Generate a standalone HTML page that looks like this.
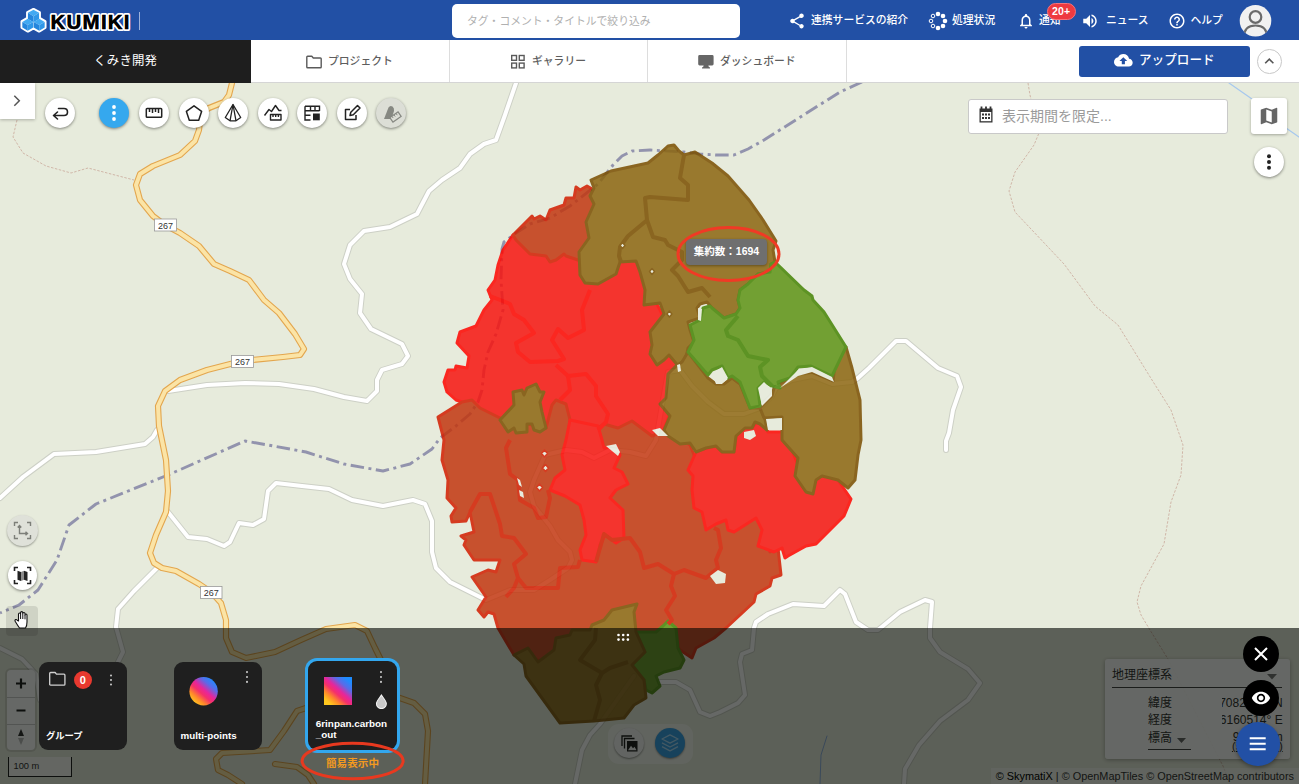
<!DOCTYPE html>
<html lang="ja">
<head>
<meta charset="utf-8">
<title>KUMIKI</title>
<style>
*{box-sizing:border-box;margin:0;padding:0}
html,body{width:1299px;height:784px;overflow:hidden;background:#e7ebdc;font-family:"Liberation Sans","Noto Sans CJK JP",sans-serif;}
#app{position:relative;width:1299px;height:784px;overflow:hidden}
.abs{position:absolute}
#hdr{position:absolute;left:0;top:0;width:1299px;height:40px;background:#2250a5;color:#fff}
#nav{position:absolute;left:0;top:40px;width:1299px;height:43px;background:#fff;border-bottom:1px solid #d5d5d5}
#nav .org{position:absolute;left:0;top:0;width:251px;height:43px;background:#1e1e1e;color:#fff;font-size:12.400px;line-height:43px;text-align:center;letter-spacing:.2px}
#nav .tab{position:absolute;top:0;height:42px;border-right:1px solid #ddd;color:#444;font-size:11.5px;font-weight:bold;line-height:42px}
#map{position:absolute;left:0;top:83px;width:1299px;height:701px;background:#e7ebdc;overflow:hidden}
#mapsvg{position:absolute;left:0;top:0}
.hitem{position:absolute;top:0;height:40px;line-height:40px;font-size:10.8px;font-weight:500;color:#fff;white-space:nowrap}
.tabt{position:absolute;top:0;height:42px;line-height:42px;font-size:10.8px;font-weight:500;color:#5e5e5e;white-space:nowrap}
.cbtn{position:absolute;width:30px;height:30px;border-radius:50%;background:#fff;box-shadow:0 1px 3px rgba(0,0,0,.45)}
.cbtn svg{position:absolute;left:0;top:0}
#ovl{position:absolute;left:0;top:628px;width:1299px;height:156px;background:rgba(0,4,0,.6)}
.card{position:absolute;background:#1f1f1f;border-radius:9px;color:#fff;font-size:11px;font-weight:bold}
</style>
</head>
<body>
<div id="app">

<!-- MAP -->
<div id="map">
<svg id="mapsvg" width="1299" height="701" viewBox="0 83 1299 701">
<defs>
<path id="rA" d="M516,83 L505,115 L496,140 L484,144 L470,154 L460,168 L442,180 L429,191 L417,214 L390,227 L364,231 L350,245 L344,264 L350,279 L362,294 L360,313 L371,329 L402,344 L408,356 L402,364 L382,370 L377,380 L377,391 L367,401 L344,397 L314,389 L279,384 L245,383 L207,385 L168,391"/>
<path id="rB" d="M0,498 L23,477 L54,454 L96,452 L145,444 L153,437 L157,430"/>
<path id="rC" d="M168,512 L188,537 L207,539 L224,546 L230,542 L239,523 L253,525 L264,519 L268,491 L276,483 L302,486 L329,489 L352,500 L383,506 L413,500 L425,504 L432,521 L432,552 L436,568 L450,582 L470,592 L486,600 L510,590 L534,590 L550,580 L568,568 L572,560 L570,552 L558,540 L550,526 L534,506 L530,492 L534,480 L545,455 L566,450 L582,452 L594,458 L610,450 L630,452 L646,456 L656,440 L662,405 L668,372 L680,370 L692,386 L708,402 L724,414 L744,414 L760,408 L772,396 L776,388 L792,380 L812,376 L832,384 L852,382 L858,378 L869,368 L896,341 L906,341 L938,368 L957,376 L961,387 L953,410 L949,433 L946,441 L946,450"/>
<path id="rD" d="M158,567 L134,591 L118,609 L116,627 L123,652 L118,662"/>
<path id="rD2" d="M0,648 L22,659 L36,674 L40,700"/>
<path id="rF" d="M660,682 L676,682 L690,690 L700,712 L710,716 L720,712 L738,703 L745,695 L740,662 L742,654 L752,650 L754,628 L756,622 L768,614 L793,604 L824,606 L840,590 L845,594 L856,622 L868,630 L878,630 L900,612 L925,600 L932,602 L930,628 L930,638 L940,652 L968,669 L980,683 L968,700 L940,721 L919,745 L905,769 L904,784"/>
<path id="rG" d="M634,676 L617,700 L600,724 L590,735 L582,750 L575,784"/>
<path id="yr" d="M232,83 L229,95 L224,102 L209,108 L201,113 L199,130 L195,141 L180,155 L153,166 L140,174 L136,185 L140,200 L153,216 L165,225 L180,233 L199,246 L214,264 L230,271 L249,280 L264,300 L279,313 L295,334 L304,349 L300,355 L283,357 L242,361 L207,370 L180,380 L165,391 L158,406 L159,426 L166,460 L168,491 L166,512 L156,535 L150,553 L154,563 L162,568 L176,571 L199,584 L211,592 L221,603 L226,620 L226,638 L232,652 L246,658 L275,652 L301,640 L326,629 L355,625 L367,631 L375,648 L381,660 L388,680 L397,697 L414,703 L425,714 L428,731 L425,784 M388,682 L370,698 L340,703 L306,708 L297,711 L284,731 L270,750 L222,753 L216,759 L218,770 L228,775 L242,784 M275,764 L297,767 L308,775 L314,784"/>
</defs>
<g id="roads" fill="none" stroke-linejoin="round" stroke-linecap="round">
<!-- thin dotted paths -->
<path d="M17,120 L13,137 L23,153 L46,166 L71,173 L88,168 L111,174 L134,180" stroke="#cdb0a2" stroke-width="0.9" stroke-dasharray="2.5,1.5" stroke-linecap="butt"/>
<path d="M1028,83 L1030,95 L1039,133 L1034,145 L1015,172 L1009,191 L1015,212 L1064,264 L1095,306 L1118,325 L1152,380 L1171,410 L1183,445 L1181,475 L1171,502 L1164,544 L1141,586 L1137,602 L1141,615 L1150,630 L1168,659 L1223,766 L1230,784" stroke="#cdb0a2" stroke-width="0.9" stroke-dasharray="2.5,1.5" stroke-linecap="butt"/>
<path d="M1229,83 L1252,99 L1286,128 L1299,137" stroke="#a6c8ee" stroke-width="1.2"/>
<path d="M827,736 L821,755 L820,784" stroke="#8fb0e0" stroke-width="1"/>
<!-- boundary dash-dot -->
<path d="M862,82 L840,92 L764,140 L748,149 L734,155 L716,155 L700,154 L684,152 L650,150 L632,151 L622,156 L613,165 L598,184 L570,206 L550,218 L530,224 L516,233 L504,242 L502,249 L501,280 L503,310 L496,334 L488,352 L484,370 L482,390 L478,402 L470,414 L456,426 L440,438 L432,449 L410,464 L383,471 L344,464 L306,452 L268,445 L245,441 L168,475 L96,504 L69,525 L57,560 L38,590 L19,605 L0,613" stroke="#9293ad" stroke-width="2.9" stroke-dasharray="13.5,4.5,3,4.5" stroke-linecap="butt"/>
<!-- white roads casing + fill -->
<!-- yellow road -->
<g stroke="#cdd0c6" stroke-width="6"><use href="#rA"/><use href="#rB"/><use href="#rC"/><use href="#rD"/><use href="#rD2"/><use href="#rF"/><use href="#rG"/></g>
<g stroke="#ffffff" stroke-width="4"><use href="#rA"/><use href="#rB"/><use href="#rC"/><use href="#rD"/><use href="#rD2"/><use href="#rF"/><use href="#rG"/></g>
<use href="#yr" stroke="#e3a64e" stroke-width="6.2"/>
<use href="#yr" stroke="#fbe4a6" stroke-width="4"/>
</g>

<g id="polys" opacity="0.85" stroke-linejoin="round">
<polygon points="513,235 503,250 498,265 495,280 488,290 492,300 484,310 476,326 460,332 457,343 469,356 467,368 456,366 455,370 448,370 444,382 447,392 456,400 462,402 480,415 560,445 600,440 660,440 675,400 680,360 666,322 650,290 640,262 600,250 560,240 530,230" fill="#f71510" stroke="#ff0500" stroke-width="3"/>
<polygon points="438,417 444,440 442,460 448,480 447,498 456,508 451,516 452,522 466,521 470,512 472,522 474,532 461,536 466,540 464,545 474,560 500,560 496,572 488,570 472,577 486,597 478,610 484,617 488,612 494,614 498,628 514,655 560,665 630,645 665,640 674,642 680,650 692,658 696,648 714,638 726,628 754,602 756,594 770,586 772,578 781,575 778,548 770,552 768,535 760,500 700,470 690,445 668,430 652,436 632,421 618,428 604,424 598,428 580,432 568,440 570,420 566,404 556,400 552,405 546,428 500,418 480,408 472,400 462,402" fill="#c23710" stroke="#d31d00" stroke-width="3"/>
<polygon points="513,235 532,216 534,219 540,216 546,220 550,210 564,205 566,198 574,198 576,187 580,190 587,186 594,190 596,210 590,240 582,262 578,260 566,256 564,254 556,260 550,262 546,256 530,254 516,240" fill="#c23710" stroke="#d31d00" stroke-width="3"/>
<polygon points="570,420 598,426 602,440 604,448 616,446 620,455 614,468 622,472 628,484 616,490 610,498 623,510 624,538 616,543 612,540 605,535 600,545 596,562 582,560 580,550 586,535 584,520 580,505 565,496 550,490 555,478 565,470 562,455 566,440" fill="#f71510" stroke="#ff0500" stroke-width="3"/>
<polygon points="696,452 706,448 716,446 722,452 734,452 736,436 745,428 752,428 758,420 766,428 768,432 782,432 790,445 800,470 825,470 838,480 851,499 844,516 816,544 806,546 788,556 785,558 782,548 774,552 758,546 762,530 756,518 734,532 728,530 726,520 716,524 706,530 702,512 694,508 692,490 693,476 688,470" fill="#f71510" stroke="#ff0500" stroke-width="3"/>
<polygon points="591,180 611,171 648,163 658,155 668,146 674,145 679,151 684,155 695,152 712,163 728,176 749,200 763,220 776,241 773,250 775,262 771,264 770,272 758,274 748,284 740,290 738,300 740,308 736,314 724,318 712,308 707,302 700,304 697,308 700,318 688,322 690,330 694,342 688,348 686,358 682,362 680,368 669,355 664,360 657,365 650,354 652,345 650,332 664,314 660,303 644,305 645,290 640,272 636,261 620,262 616,274 598,284 585,283 580,275 579,252 589,238 586,222 594,204 590,196 594,188" fill="#8c6610" stroke="#7a4e00" stroke-width="3"/>
<polygon points="676,366 668,374 666,398 660,404 670,416 664,430 668,436 680,444 690,443 696,452 706,448 716,446 722,452 734,452 736,436 745,428 752,428 755,422 760,424 767,430 765,419 760,408 750,408 740,384 732,378 724,384 716,384 708,378 688,352 682,362" fill="#8c6610" stroke="#7a4e00" stroke-width="3"/>
<polygon points="846,347 852,368 860,400 861,440 858,455 855,480 848,488 838,480 822,476 816,480 813,494 806,492 795,476 798,458 782,440 782,430 782,417 764,418 760,408 772,396 774,388 780,384 798,374 812,372 833,381 835,364" fill="#8c6610" stroke="#7a4e00" stroke-width="3"/>
<polygon points="500,420 514,405 513,392 522,390 524,395 527,388 536,384 540,392 544,392 540,402 542,412 546,428 540,432 534,430 532,424 527,424 527,432 516,433 514,428 508,432" fill="#8c6610" stroke="#7a4e00" stroke-width="3"/>
<polygon points="636,632 656,632 663,626 668,621 676,628 678,648 684,660 680,668 664,672 656,676 660,686 652,693 646,690 644,680 632,665 645,652" fill="#5e9316" stroke="#458405" stroke-width="3"/>
<polygon points="514,655 524,664 526,676 560,723 594,721 624,718 634,705 646,698 644,680 632,665 645,652 636,632 634,612 637,604 612,610 604,620 592,625 590,630 572,630 570,635 556,638 554,650 538,662 528,648" fill="#8c6610" stroke="#7a4e00" stroke-width="3"/>
<polygon points="775,262 804,290 812,296 813,300 824,312 846,347 832,376 811,366 798,367 790,378 778,382 780,388 772,386 764,382 758,388 760,406 750,408 740,382 732,376 728,378 722,366 712,370 708,375 688,352 694,340 690,325 700,320 703,308 710,306 712,308 724,318 736,314 740,308 738,300 740,290 748,284 758,274 770,272 771,264" fill="#5e9316" stroke="#458405" stroke-width="3"/>
<polyline points="684,155 680,178 688,185 688,200 650,197 645,198 647,220 653,237 665,240 668,245 682,252 682,260 672,270 678,276 688,292 702,288 710,297" fill="none" stroke="#7a4e00" stroke-width="4"/>
<polyline points="646,221 628,236 620,247 619,256 621,262" fill="none" stroke="#7a4e00" stroke-width="4"/>
<polyline points="738,316 726,330 728,336 738,340 748,356 768,360 760,367 762,376 772,386" fill="none" stroke="#458405" stroke-width="4"/>
<polyline points="490,296 510,304 514,314 524,320 534,333 516,343 518,352 530,362 558,361 564,359 552,340 558,329 568,338 584,330 582,310 590,290" fill="none" stroke="#ff0500" stroke-width="4"/>
<polyline points="556,365 568,376 586,374 596,386 596,396 608,414 606,422 598,430" fill="none" stroke="#ff0500" stroke-width="4"/>
<polyline points="568,376 570,390 560,400" fill="none" stroke="#ff0500" stroke-width="4"/>
<polyline points="510,440 506,448 510,474 518,480 520,500 534,508 538,518 546,517 550,498 548,490" fill="none" stroke="#d31d00" stroke-width="4"/>
<polyline points="470,512 480,494 490,494 500,524 502,536 514,538 526,554 514,564 518,578 514,588 506,597" fill="none" stroke="#d31d00" stroke-width="4"/>
<polyline points="518,578 526,588 558,588 560,568 578,567 580,560" fill="none" stroke="#d31d00" stroke-width="4"/>
<polyline points="596,562 604,534 612,540 630,538 640,552 644,568 658,564 674,574 684,570 706,578 718,568 716,560 721,548 718,530 714,528" fill="none" stroke="#d31d00" stroke-width="4"/>
<polyline points="674,574 671,586 675,596 666,610 672,620 668,624" fill="none" stroke="#d31d00" stroke-width="4"/>
<polyline points="596,628 595,640 580,660 602,673 610,668 628,662" fill="none" stroke="#7a4e00" stroke-width="4"/>
<polyline points="602,673 596,685 600,700 594,721" fill="none" stroke="#7a4e00" stroke-width="4"/>
<polygon points="712,374 722,367 728,378 722,384 716,384" fill="#e7ebdc"/>
<polygon points="758,388 764,382 772,390 772,396 762,406" fill="#e7ebdc"/>
<polygon points="798,370 812,367 832,377 834,382 812,372 798,376 780,388 790,378" fill="#e7ebdc"/>
<polygon points="766,419 782,418 782,430 768,430" fill="#e7ebdc"/>
<polygon points="744,432 754,430 756,436 750,440 744,438" fill="#e7ebdc"/>
<polygon points="606,446 616,444 620,452 618,456" fill="#e7ebdc"/>
<polygon points="652,430 660,428 668,436 658,436" fill="#e7ebdc"/>
<polygon points="710,576 718,570 726,574 725,583 716,584" fill="#e7ebdc"/>
<polygon points="698,308 702,309 701,321 698,320" fill="#e7ebdc"/>
<polygon points="677,365 680,364 681,371 678,372" fill="#e7ebdc"/>
<polygon points="517,478 520,480 522,487 519,485" fill="#e7ebdc"/>
<polygon points="519,490 523,492 524,498 520,496" fill="#e7ebdc"/>
<polygon points="649.5,271.5 652,268.5 654.5,271.5 652,274.5" fill="#e7ebdc" stroke="#7a4e00" stroke-width="1.5"/>
<polygon points="666.9,314 669.4,311 671.9,314 669.4,317" fill="#e7ebdc" stroke="#7a4e00" stroke-width="1.5"/>
<polygon points="620.0,245.5 622.5,242.5 625.0,245.5 622.5,248.5" fill="#e7ebdc" stroke="#7a4e00" stroke-width="1.5"/>
<polygon points="541.5,453.5 544.5,450.0 547.5,453.5 544.5,457.0" fill="#e7ebdc" stroke="#d31d00" stroke-width="1.6"/>
<polygon points="542.5,468 545.5,464.5 548.5,468 545.5,471.5" fill="#e7ebdc" stroke="#d31d00" stroke-width="1.6"/>
<polygon points="536.5,487.5 539.5,484.0 542.5,487.5 539.5,491.0" fill="#e7ebdc" stroke="#d31d00" stroke-width="1.6"/>
</g>
<g id="rlabels" font-family="Liberation Sans, sans-serif" font-size="9.500" fill="#333" text-anchor="middle">
<rect x="154.500" y="219" width="22" height="12" fill="#fff" stroke="#999" stroke-width="0.800"/><text x="165.500" y="228.500" textLength="15" lengthAdjust="spacingAndGlyphs">267</text>
<rect x="231.500" y="355.500" width="22" height="12" fill="#fff" stroke="#999" stroke-width="0.800"/><text x="242.500" y="365" textLength="15" lengthAdjust="spacingAndGlyphs">267</text>
<rect x="200.500" y="586.500" width="21.500" height="12" fill="#fff" stroke="#999" stroke-width="0.800"/><text x="211.200" y="596" textLength="15" lengthAdjust="spacingAndGlyphs">267</text>
</g>
</svg>
</div>

<!-- HEADER -->
<div id="hdr">
  <svg class="abs" style="left:0;top:0" width="160" height="40" viewBox="0 0 160 40">
    <!-- cubes logo -->
    <g transform="translate(33.5 20.5) scale(0.93) translate(-33.5 -20.5)"><g stroke="#fff" stroke-width="3" stroke-linejoin="round" fill="#fff">
      <path d="M33.5,8.5 L40,12 L40,18 L46,21.5 L46,28 L39.5,32 L33.5,28.5 L27.5,32 L21,28 L21,21.5 L27,18 L27,12 Z"/>
    </g>
    <g stroke="none">
      <path d="M33.5,9 L39.5,12.3 L33.5,15.8 L27.5,12.3 Z" fill="#41a9f2"/>
      <path d="M27.5,12.3 L33.5,15.8 L33.5,22.5 L27.5,19 Z" fill="#2486dd"/>
      <path d="M39.5,12.3 L33.5,15.8 L33.5,22.5 L39.5,19 Z" fill="#2f97e8"/>
      <path d="M27.3,18.6 L33.3,22 L27.3,25.4 L21.5,22 Z" fill="#41a9f2"/>
      <path d="M21.5,22 L27.3,25.4 L27.3,31.5 L21.5,28 Z" fill="#2486dd"/>
      <path d="M33.3,22 L27.3,25.4 L27.3,31.5 L33.3,28 Z" fill="#2f97e8"/>
      <path d="M39.7,18.6 L45.5,22 L39.7,25.4 L33.7,22 Z" fill="#41a9f2"/>
      <path d="M33.7,22 L39.7,25.4 L39.7,31.5 L33.7,28 Z" fill="#2486dd"/>
      <path d="M45.5,22 L39.7,25.4 L39.7,31.5 L45.5,28 Z" fill="#2f97e8"/>
    </g></g>
    <text x="50.6" y="28.8" font-family="Liberation Sans, sans-serif" font-weight="bold" font-size="20.5" letter-spacing="1.2" fill="#000" stroke="#fff" stroke-width="4" stroke-linejoin="round" paint-order="stroke">KUMIKI</text>
    <text x="50.6" y="28.8" font-family="Liberation Sans, sans-serif" font-weight="bold" font-size="20.5" letter-spacing="1.2" fill="#000" stroke="#000" stroke-width="0.3">KUMIKI</text>
    <rect x="139" y="12" width="1" height="18" fill="#9db2dc"/>
  </svg>
  <div class="abs" style="left:452px;top:4px;width:288px;height:34px;background:#fff;border-radius:5px;color:#b0b0b0;font-size:10.8px;line-height:34px;padding-left:15px">タグ・コメント・タイトルで絞り込み</div>

  <!-- share -->
  <svg class="abs" style="left:788px;top:12px" width="18" height="18" viewBox="0 0 24 24"><path fill="#fff" d="M18 16.08c-.76 0-1.44.3-1.96.77L8.91 12.7c.05-.23.09-.46.09-.7s-.04-.47-.09-.7l7.05-4.11c.54.5 1.25.81 2.04.81 1.660 0 3-1.340 3-3s-1.340-3-3-3-3 1.340-3 3c0 .24.04.47.09.7L8.040 9.810C7.500 9.310 6.790 9 6 9c-1.660 0-3 1.340-3 3s1.340 3 3 3c.79 0 1.500-.31 2.040-.81l7.120 4.160c-.05.21-.08.43-.08.65 0 1.610 1.310 2.920 2.920 2.920 1.610 0 2.920-1.310 2.920-2.920s-1.310-2.920-2.920-2.920z"/></svg>
  <div class="hitem" style="left:811px">連携サービスの紹介</div>
  <!-- process -->
  <svg class="abs" style="left:928px;top:11px" width="20" height="20" viewBox="-10 -10 20 20">
    <g fill="#fff"><circle cx="0" cy="-7" r="2.3"/><circle cx="7" cy="0" r="2.3"/><circle cx="0" cy="7" r="2.3"/><circle cx="5" cy="5" r="2.3"/><circle cx="5" cy="-5" r="2.3"/></g>
    <g fill="none" stroke="#fff" stroke-width="1"><circle cx="-5" cy="-5" r="1.8"/><circle cx="-7" cy="0" r="1.8"/><circle cx="-5" cy="5" r="1.8"/></g>
  </svg>
  <div class="hitem" style="left:952px">処理状況</div>
  <!-- bell -->
  <svg class="abs" style="left:1017px;top:12px" width="18" height="18" viewBox="0 0 24 24"><path fill="#fff" d="M12 22c1.100 0 2-.9 2-2h-4c0 1.100.9 2 2 2zm6-6v-5c0-3.070-1.630-5.640-4.500-6.320V4c0-.83-.67-1.500-1.500-1.500s-1.500.67-1.500 1.500v.68C7.640 5.360 6 7.920 6 11v5l-2 2v1h16v-1l-2-2zm-2 1H8v-6c0-2.480 1.510-4.500 4-4.500s4 2.020 4 4.500v6z"/></svg>
  <div class="hitem" style="left:1039px">通知</div>
  <div class="abs" style="left:1046.500px;top:2.500px;width:29.500px;height:17px;border-radius:9px;background:#ee3a40;border:1px solid #f5737a;color:#fff;font-size:10.500px;font-weight:bold;line-height:15px;text-align:center;letter-spacing:.2px">20+</div>
  <!-- speaker -->
  <svg class="abs" style="left:1081px;top:11.500px" width="18" height="18" viewBox="0 0 24 24"><path fill="#fff" d="M3 9v6h4l5 5V4L7 9H3zm13.500 3c0-1.770-1.020-3.290-2.500-4.030v8.050c1.480-.73 2.500-2.250 2.500-4.020zM14 3.230v2.060c2.890.86 5 3.540 5 6.710s-2.110 5.850-5 6.710v2.060c4.010-.91 7-4.490 7-8.770s-2.990-7.860-7-8.770z"/></svg>
  <div class="hitem" style="left:1106px">ニュース</div>
  <!-- help -->
  <svg class="abs" style="left:1168px;top:11.800px" width="18" height="18" viewBox="0 0 24 24"><path fill="#fff" d="M11 18h2v-2h-2v2zm1-16C6.480 2 2 6.480 2 12s4.480 10 10 10 10-4.480 10-10S17.520 2 12 2zm0 18c-4.410 0-8-3.590-8-8s3.590-8 8-8 8 3.590 8 8-3.590 8-8 8zm0-14c-2.210 0-4 1.790-4 4h2c0-1.100.9-2 2-2s2 .9 2 2c0 2-3 1.750-3 5h2c0-2.250 3-2.500 3-5 0-2.210-1.790-4-4-4z"/></svg>
  <div class="hitem" style="left:1190.500px">ヘルプ</div>
  <!-- avatar -->
  <svg class="abs" style="left:1239px;top:4px" width="33" height="33" viewBox="0 0 33 33">
    <defs><clipPath id="avc"><circle cx="16.500" cy="16.800" r="15.800"/></clipPath></defs>
    <circle cx="16.500" cy="16.800" r="15.800" fill="#f1f1f1"/>
    <g clip-path="url(#avc)" fill="none" stroke="#6b6b6b" stroke-width="2.200">
      <circle cx="16.500" cy="13" r="5.800"/>
      <path d="M5,33 C5,24 10,21.500 16.500,21.500 C23,21.500 28,24 28,33"/>
    </g>
  </svg>
</div>

<!-- NAV -->
<div id="nav">
  <div class="org">くみき開発</div>
  <div class="abs" style="left:449px;top:0;width:1px;height:42px;background:#ddd"></div>
  <div class="abs" style="left:647px;top:0;width:1px;height:42px;background:#ddd"></div>
  <div class="abs" style="left:846px;top:0;width:1px;height:42px;background:#ddd"></div>
  <!-- folder -->
  <svg class="abs" style="left:305px;top:14px" width="18" height="16" viewBox="0 0 18 16"><path d="M1.800,3 Q1.800,2.200 2.600,2.200 L6.800,2.200 L8.300,4 L15.400,4 Q16.200,4 16.200,4.800 L16.200,13 Q16.200,13.800 15.400,13.800 L2.600,13.800 Q1.800,13.800 1.800,13 Z" fill="none" stroke="#5a5a5a" stroke-width="1.400" stroke-linejoin="round"/></svg>
  <div class="tabt" style="left:328px">プロジェクト</div>
  <!-- grid -->
  <svg class="abs" style="left:510px;top:14px" width="16" height="16" viewBox="0 0 16 16"><g fill="none" stroke="#5a5a5a" stroke-width="1.400"><rect x="1.700" y="1.500" width="4.800" height="4.800"/><rect x="9.300" y="1.500" width="4.800" height="4.800"/><rect x="1.700" y="9.100" width="4.800" height="4.800"/><rect x="9.300" y="9.100" width="4.800" height="4.800"/></g></svg>
  <div class="tabt" style="left:532px">ギャラリー</div>
  <!-- monitor -->
  <svg class="abs" style="left:697px;top:14px" width="18" height="16" viewBox="0 0 18 16"><path d="M2.600,1 L15.200,1 Q16.600,1 16.600,2.400 L16.600,10 Q16.600,11.400 15.200,11.400 L11.300,11.400 L12,13.200 L13,13.200 L13,14.600 L5,14.600 L5,13.200 L6,13.200 L6.700,11.400 L2.600,11.400 Q1.200,11.400 1.200,10 L1.200,2.400 Q1.200,1 2.600,1 Z" fill="#666"/></svg>
  <div class="tabt" style="left:720px">ダッシュボード</div>
  <!-- upload -->
  <div class="abs" style="left:1079px;top:6px;width:171px;height:30.500px;background:#2250a5;border-radius:3px"></div>
  <svg class="abs" style="left:1114.300px;top:11.300px" width="18.700" height="18.700" viewBox="0 0 24 24"><path fill="#fff" d="M19.350 10.040C18.670 6.590 15.640 4 12 4 9.110 4 6.600 5.640 5.350 8.040 2.340 8.360 0 10.910 0 14c0 3.310 2.690 6 6 6h13c2.760 0 5-2.240 5-5 0-2.640-2.050-4.780-4.650-4.960zM14 13v4h-4v-4H7l5-5 5 5h-3z"/></svg>
  <div class="abs" style="left:1139px;top:6px;height:30px;line-height:29px;color:#fff;font-size:12.600px;font-weight:500;white-space:nowrap">アップロード</div>
  <div class="abs" style="left:1257px;top:9.200px;width:24.600px;height:24.600px;border-radius:50%;border:1px solid #c8c8c8;background:#fff"></div>
  <svg class="abs" style="left:1257px;top:9.200px" width="24.600" height="24.600" viewBox="0 0 24.600 24.600"><path d="M8.200,14.300 L12.300,10.200 L16.400,14.300" fill="none" stroke="#555" stroke-width="1.600"/></svg>
</div>

<!-- MAP CONTROLS -->
<div class="abs" style="left:0;top:83px;width:34.500px;height:36px;background:#fff;box-shadow:0 1px 3px rgba(0,0,0,.25)"></div>
<svg class="abs" style="left:0;top:83px" width="35" height="36" viewBox="0 0 35 36"><path d="M14.300,12.800 L19.300,17.800 L14.300,22.800" fill="none" stroke="#555" stroke-width="1.500"/></svg>

<div class="cbtn" style="left:45px;top:98px"><svg width="30" height="30" viewBox="0 0 30 30"><path d="M9,17.500 L19,17.500 Q22.500,17.500 22.500,14 Q22.500,10.500 19,10.500 L13.500,10.500 M12.500,14 L8.500,17.500 L12.500,21" fill="none" stroke="#222" stroke-width="1.600" stroke-linecap="round" stroke-linejoin="round"/></svg></div>
<div class="cbtn" style="left:99px;top:98px;background:#35a8ee"><svg width="30" height="30" viewBox="0 0 30 30"><g fill="#fff"><circle cx="15" cy="9" r="1.900"/><circle cx="15" cy="15" r="1.900"/><circle cx="15" cy="21" r="1.900"/></g></svg></div>
<div class="cbtn" style="left:138.500px;top:98px"><svg width="30" height="30" viewBox="0 0 30 30"><g fill="none" stroke="#222" stroke-width="1.500"><rect x="7.300" y="10.500" width="15.400" height="8.800" rx="0.800"/><path d="M10.500,10.500 V14 M13.500,10.500 V15 M16.500,10.500 V14 M19.500,10.500 V15"/></g></svg></div>
<div class="cbtn" style="left:178.500px;top:98px"><svg width="30" height="30" viewBox="0 0 30 30"><path d="M15,7.800 L22.600,13.400 L19.700,22.200 L10.300,22.200 L7.400,13.400 Z" fill="none" stroke="#222" stroke-width="1.500" stroke-linejoin="round"/></svg></div>
<div class="cbtn" style="left:218px;top:98px"><svg width="30" height="30" viewBox="0 0 30 30"><g fill="none" stroke="#222" stroke-width="1.300" stroke-linejoin="round"><path d="M15,6.500 L7.300,19.500 L12,22.800 L18,22.800 L22.700,19.500 Z"/><path d="M15,6.500 L12,22.800 M15,6.500 L18,22.800"/></g></svg></div>
<div class="cbtn" style="left:257.500px;top:98px"><svg width="30" height="30" viewBox="0 0 30 30"><g fill="none" stroke="#222" stroke-width="1.400" stroke-linejoin="round"><path d="M6.500,17.500 L11,11.500 L13.500,13.500 L17.500,7.500 L21,12.500 L23.500,12.500"/><rect x="12.500" y="16.500" width="10.500" height="5.500"/><path d="M15,16.500 V19 M17.700,16.500 V19 M20.400,16.500 V19"/></g></svg></div>
<div class="cbtn" style="left:297px;top:98px"><svg width="30" height="30" viewBox="0 0 30 30"><g fill="none" stroke="#222" stroke-width="1.400"><path d="M8,8.300 H22.500 V13 M8,8.300 V22 H13.500 M8,12.700 H22.500 M8,17.300 H13.500 M13.500,8.300 V12.700 M18,8.300 V12.700"/></g><rect x="16" y="15.500" width="6.800" height="6.800" fill="#222"/></svg></div>
<div class="cbtn" style="left:336.500px;top:98px"><svg width="30" height="30" viewBox="0 0 30 30"><g fill="none" stroke="#222" stroke-width="1.500" stroke-linejoin="round"><path d="M13,11.500 H8.500 V21.500 H19 V17"/><path d="M13,17.500 L13.800,14.200 L20.500,7.500 L23,10 L16.300,16.700 Z"/></g></svg></div>
<div class="cbtn" style="left:376px;top:98px;background:#dcded6"><svg width="30" height="30" viewBox="0 0 30 30"><path d="M8,21 L12.500,9.500 Q14,7 16.500,8.500 Q18.500,10 18,13 L15.500,21 Z" fill="#868882"/><g transform="rotate(-35 19.500 19)"><rect x="14.500" y="16.300" width="10" height="5.400" fill="#dcded6" stroke="#868882" stroke-width="1.200"/><path d="M17,16.300 V18.500 M19.500,16.300 V18.500 M22,16.300 V18.500" stroke="#868882" stroke-width="0.900"/></g></svg></div>

<!-- date filter -->
<div class="abs" style="left:967.500px;top:98.500px;width:260px;height:35px;background:#fff;border:1px solid #c9c9c9;border-radius:3px"></div>
<svg class="abs" style="left:977px;top:105px" width="18" height="20" viewBox="0 0 18 20"><path d="M2.500,3.500 H15.500 V17.500 H2.500 Z" fill="#333"/><path d="M4.500,1.500 V4 M9,1.500 V4 M13.500,1.500 V4" stroke="#333" stroke-width="1.800"/><rect x="3.800" y="7" width="10.400" height="9.200" fill="#fff"/><g fill="#333"><rect x="5" y="8.500" width="2" height="2"/><rect x="8" y="8.500" width="2" height="2"/><rect x="11" y="8.500" width="2" height="2"/><rect x="5" y="12" width="2" height="2"/><rect x="8" y="12" width="2" height="2"/><rect x="11" y="12" width="2" height="2"/></g></svg>
<div class="abs" style="left:1002px;top:98.500px;height:35px;line-height:34px;font-size:14px;color:#9a9a9a;white-space:nowrap">表示期間を限定...</div>
<!-- map button -->
<div class="abs" style="left:1250.500px;top:98px;width:36.500px;height:36px;background:#fff;border-radius:3px;box-shadow:0 1px 3px rgba(0,0,0,.3)"></div>
<svg class="abs" style="left:1258px;top:105px" width="22" height="22" viewBox="0 0 24 24"><path fill="#666" d="M20.500 3l-.16.030L15 5.100 9 3 3.360 4.900c-.21.070-.36.250-.36.480V20.500c0 .28.220.5.500.5l.16-.03L9 18.900l6 2.100 5.640-1.900c.21-.7.360-.25.360-.48V3.500c0-.28-.22-.5-.5-.5zM15 19l-6-2.110V5l6 2.110V19z"/></svg>
<div class="cbtn" style="left:1254px;top:146.500px"><svg width="30" height="30" viewBox="0 0 30 30"><g fill="#222"><circle cx="15" cy="9.300" r="2"/><circle cx="15" cy="15" r="2"/><circle cx="15" cy="20.700" r="2"/></g></svg></div>

<!-- left side buttons -->
<div class="cbtn" style="left:7px;top:514.500px;width:31px;height:31px;background:#dfe1d9;box-shadow:0 1px 2px rgba(0,0,0,.35)"><svg width="31" height="31" viewBox="0 0 31 31"><g fill="none" stroke="#7d7f79" stroke-width="1.400"><path d="M7.500,11 V7.500 H11 M20,7.500 H23.500 V11 M23.500,20 V23.500 H20 M11,23.500 H7.500 V20"/><path d="M12.500,10.500 V18.500 H20.500 M10.700,12.500 L12.500,10.500 L14.300,12.500 M18.500,16.700 L20.500,18.500 L18.500,20.300"/></g></svg></div>
<div class="cbtn" style="left:8px;top:560.500px;width:29px;height:29px;box-shadow:0 1px 3px rgba(0,0,0,.45)"><svg width="29" height="29" viewBox="0 0 29 29"><g fill="none" stroke="#222" stroke-width="1.600"><path d="M6.500,10 V6.500 H10 M19,6.500 H22.500 V10 M22.500,19 V22.500 H19 M10,22.500 H6.500 V19"/></g><path d="M9.500,9.800 L13,11 V20 L9.500,18.800 Z M19.500,11 L16,9.800 V18.800 L19.500,20 Z" fill="#222"/><path d="M13,11 L16,9.800 V18.800 L13,20 Z" fill="#8a8a8a"/></svg></div>
<div class="abs" style="left:6px;top:605.500px;width:32px;height:30px;border-radius:4px;background:rgba(0,0,0,.1)"></div>
<svg class="abs" style="left:12px;top:609px" width="20" height="22" viewBox="0 0 20 22"><path d="M6.500,12 V5.200 Q6.500,4 7.600,4 Q8.600,4 8.600,5.200 V3.800 Q8.600,2.600 9.700,2.600 Q10.800,2.600 10.800,3.800 V4.600 Q10.800,3.500 11.900,3.500 Q13,3.500 13,4.700 V6 Q13,5 14,5 Q15,5 15,6.200 V13 Q15,17 13.500,19 H7.500 Q6,17 3.300,12.500 Q2.500,11 3.600,10.600 Q4.600,10.300 5.500,11.500 Z" fill="#fff" stroke="#111" stroke-width="1.100" stroke-linejoin="round"/><path d="M8.600,5.200 V10 M10.800,4.600 V10 M13,6 V10.300" stroke="#111" stroke-width="1"/></svg>

<!-- under-overlay widgets -->
<div class="abs" style="left:7px;top:670px;width:28px;height:80px;background:#fff;border-radius:4px;box-shadow:0 0 0 2px rgba(0,0,0,.1)"></div>
<div class="abs" style="left:7px;top:697px;width:28px;height:1px;background:#ccc"></div>
<div class="abs" style="left:7px;top:723.500px;width:28px;height:1px;background:#ccc"></div>
<svg class="abs" style="left:7px;top:670px" width="28" height="80" viewBox="0 0 28 80"><path d="M9,13.500 H19 M14,8.500 V18.500 M9.500,40.500 H18.500" stroke="#222" stroke-width="2.200" fill="none"/><path d="M14,59 L17,66 H11 Z" fill="#333"/><path d="M14,75 L17,68 H11 Z" fill="#bbb"/></svg>
<div class="abs" style="left:8px;top:757px;width:64px;height:20px;background:rgba(255,255,255,.75);border:1.500px solid #222;border-top:none;font-size:9.300px;line-height:18px;color:#333;padding-left:4.500px">100 m</div>

<div class="abs" style="left:608px;top:724px;width:84.500px;height:40px;border-radius:11px;background:rgba(255,255,255,.5)"></div>
<div class="abs" style="left:613.500px;top:728px;width:30px;height:30px;border-radius:50%;background:#f4f4f4;box-shadow:0 1px 2px rgba(0,0,0,.4)"></div>
<svg class="abs" style="left:613.500px;top:728px" width="30" height="30" viewBox="0 0 30 30"><g fill="none" stroke="#222" stroke-width="1.300"><path d="M8,18 V8 H18"/><path d="M10.500,20.500 V10.500 H20.500"/></g><rect x="13" y="13" width="10.500" height="10.500" fill="#222"/><path d="M14,22.300 L17,17.800 L19,20.300 L20.500,18.800 L22.600,22.300 Z" fill="#f4f4f4"/></svg>
<div class="abs" style="left:655.300px;top:728px;width:30px;height:30px;border-radius:50%;background:#3aa0e6;box-shadow:0 1px 2px rgba(0,0,0,.4)"></div>
<svg class="abs" style="left:655.300px;top:728px" width="30" height="30" viewBox="0 0 30 30"><g fill="none" stroke="#a9d8f7" stroke-width="1.300" stroke-linejoin="round"><path d="M15,6.800 L23,11 L15,15.200 L7,11 Z"/><path d="M7,14.800 L15,19 L23,14.800"/><path d="M7,18.600 L15,22.800 L23,18.600"/></g></svg>

<!-- coord panel -->
<div class="abs" style="left:1104.700px;top:659px;width:185.300px;height:100px;background:rgba(255,255,255,.9);border-radius:3px;box-shadow:0 1px 4px rgba(0,0,0,.3);font-size:12px;color:#333">
  <div class="abs" style="left:7.300px;top:8px;line-height:16px;white-space:nowrap">地理座標系</div>
  <svg class="abs" style="left:162px;top:15px" width="10" height="6" viewBox="0 0 10 6"><path d="M0,0 H10 L5,5.500 Z" fill="#777"/></svg>
  <div class="abs" style="left:7.300px;top:28px;width:170.500px;height:1px;background:#444"></div>
  <div class="abs" style="left:43.300px;top:36px;line-height:16px">緯度</div>
  <div class="abs" style="left:43.300px;top:53px;line-height:16px">経度</div>
  <div class="abs" style="left:43.300px;top:71px;line-height:16px">標高</div>
  <svg class="abs" style="left:72px;top:79px" width="9" height="5" viewBox="0 0 9 5"><path d="M0,0 H9 L4.500,5 Z" fill="#666"/></svg>
  <div class="abs" style="left:43.300px;top:90px;width:43px;height:1px;background:#444"></div>
  <div class="abs" style="left:117px;top:36px;width:61px;height:16px;overflow:hidden"><div class="abs" style="right:0;top:0;line-height:16px;white-space:nowrap">35.7082461° N</div></div>
  <div class="abs" style="left:117px;top:53px;width:61px;height:16px;overflow:hidden"><div class="abs" style="right:0;top:0;line-height:16px;white-space:nowrap">133.6160514° E</div></div>
  <div class="abs" style="left:117px;top:70px;width:61px;height:16px;overflow:hidden"><div class="abs" style="right:0;top:0;line-height:16px;white-space:nowrap">951.20 m</div></div>
  <div class="abs" style="left:117px;top:81px;width:61px;height:13px;overflow:hidden"><div class="abs" style="right:0;top:0;line-height:13px;font-size:10.500px;white-space:nowrap;text-decoration:underline">(951.20 m)</div></div>
</div>
<div class="abs" style="right:0;top:767.500px;height:16.500px;background:rgba(255,255,255,.5);padding:0 5px 0 5px;font-size:10.900px;line-height:17px;color:#333;white-space:nowrap"><span style="color:#000">© SkymatiX</span> | © OpenMapTiles © OpenStreetMap contributors</div>

<div id="ovl"></div>

<!-- grip -->
<svg class="abs" style="left:616px;top:632px" width="15" height="11" viewBox="0 0 15 11"><g fill="#fff"><circle cx="2.500" cy="3" r="1.300"/><circle cx="7.200" cy="3" r="1.300"/><circle cx="11.900" cy="3" r="1.300"/><circle cx="2.500" cy="7.600" r="1.300"/><circle cx="7.200" cy="7.600" r="1.300"/><circle cx="11.900" cy="7.600" r="1.300"/></g></svg>

<!-- cards -->
<div class="card" style="left:38.600px;top:661.500px;width:88.700px;height:88.500px">
  <svg class="abs" style="left:9px;top:9.500px" width="18.800" height="16" viewBox="0 0 20 17"><path d="M1.800,2.600 Q1.800,1.600 2.800,1.600 L7.600,1.600 L9,3.400 L17,3.400 Q18,3.400 18,4.400 L18,14 Q18,15 17,15 L2.800,15 Q1.800,15 1.800,14 Z" fill="none" stroke="#d0d0d0" stroke-width="1.400" stroke-linejoin="round"/></svg>
  <div class="abs" style="left:35.300px;top:9px;width:18px;height:18px;border-radius:50%;background:#e8392f;color:#fff;font-size:11px;line-height:18px;text-align:center;font-weight:bold">0</div>
  <svg class="abs" style="left:69px;top:11px" width="6" height="14" viewBox="0 0 6 14"><g fill="#c4c4c4"><circle cx="3" cy="2.500" r="1.050"/><circle cx="3" cy="7" r="1.050"/><circle cx="3" cy="11.500" r="1.050"/></g></svg>
  <div class="abs" style="left:7.400px;top:67.500px;line-height:14px;font-size:9.300px;white-space:nowrap">グループ</div>
</div>
<div class="card" style="left:173.600px;top:661.500px;width:88.800px;height:88.500px">
  <svg class="abs" style="left:15px;top:15px" width="30" height="30" viewBox="0 0 30 30"><defs><linearGradient id="gr1" x1="0.850" y1="0.100" x2="0.150" y2="0.900"><stop offset="0" stop-color="#1e8cff"/><stop offset="0.220" stop-color="#5a6be8"/><stop offset="0.450" stop-color="#e8259a"/><stop offset="0.600" stop-color="#f5306a"/><stop offset="0.800" stop-color="#ff8a2a"/><stop offset="1" stop-color="#ffc81e"/></linearGradient></defs><circle cx="14.600" cy="14.300" r="14.200" fill="url(#gr1)"/></svg>
  <svg class="abs" style="left:70.200px;top:8px" width="6" height="14" viewBox="0 0 6 14"><g fill="#c4c4c4"><circle cx="3" cy="2.100" r="1.050"/><circle cx="3" cy="7" r="1.050"/><circle cx="3" cy="11.900" r="1.050"/></g></svg>
  <div class="abs" style="left:7px;top:67.300px;line-height:14px;font-size:9.800px;white-space:nowrap">multi-points</div>
</div>
<div class="abs" style="left:305.400px;top:658px;width:94.600px;height:95px;border-radius:12px;background:#33a7ee"></div>
<div class="card" style="left:308.400px;top:661px;width:88.600px;height:89px">
  <svg class="abs" style="left:15.600px;top:16px" width="28" height="28" viewBox="0 0 28 28"><rect x="0" y="0" width="28" height="28" fill="url(#gr1)"/></svg>
  <svg class="abs" style="left:70px;top:8.500px" width="6" height="14" viewBox="0 0 6 14"><g fill="#c4c4c4"><circle cx="3" cy="2.100" r="1.050"/><circle cx="3" cy="7" r="1.050"/><circle cx="3" cy="11.900" r="1.050"/></g></svg>
  <svg class="abs" style="left:67px;top:33px" width="12.800" height="15.400" viewBox="0 0 15 18"><path d="M7.500,1.200 C9.500,4.500 13.300,8 13.300,11.300 A5.800,5.800 0 0 1 1.700,11.300 C1.700,8 5.500,4.500 7.500,1.200 Z" fill="#c9c9c9" stroke="#f4f4f4" stroke-width="1.200"/></svg>
  <div class="abs" style="left:7.400px;top:56.500px;line-height:11.500px;font-size:9.900px;white-space:nowrap">6rinpan.carbon<br>_out</div>
</div>
<svg class="abs" style="left:296px;top:738px" width="114" height="46" viewBox="296 738 114 46"><ellipse cx="352.600" cy="761" rx="50.500" ry="17.800" fill="none" stroke="#e8391f" stroke-width="3"/></svg>
<div class="abs" style="left:302px;top:755px;width:101px;height:16px;line-height:16px;text-align:center;color:#f39a1f;font-size:10.600px;font-weight:bold;white-space:nowrap">簡易表示中</div>

<!-- tooltip + ellipse on map -->
<div class="abs" style="left:686px;top:239px;width:81px;height:25.500px;border-radius:4px;background:#6f6f6f;box-shadow:0 1px 3px rgba(0,0,0,.35);color:#fff;font-size:10.500px;font-weight:bold;line-height:25px;text-align:center;white-space:nowrap">集約数：1694</div>
<svg class="abs" style="left:670px;top:220px" width="116" height="68" viewBox="670 220 116 68"><ellipse cx="728.500" cy="254" rx="50.500" ry="26.500" fill="none" stroke="#f03a25" stroke-width="3"/></svg>

<!-- right buttons -->
<div class="abs" style="left:1243.200px;top:635.800px;width:36px;height:36px;border-radius:50%;background:#000"></div>
<svg class="abs" style="left:1243.200px;top:635.800px" width="36" height="36" viewBox="0 0 36 36"><path d="M12,12 L24,24 M24,12 L12,24" stroke="#fff" stroke-width="2" fill="none"/></svg>
<div class="abs" style="left:1243.200px;top:679.500px;width:36px;height:36px;border-radius:50%;background:#000"></div>
<svg class="abs" style="left:1251.200px;top:687.500px" width="20" height="20" viewBox="0 0 24 24"><path fill="#fff" d="M12 4.500C7 4.500 2.730 7.610 1 12c1.730 4.390 6 7.500 11 7.500s9.270-3.110 11-7.500c-1.730-4.390-6-7.500-11-7.500zM12 17c-2.760 0-5-2.240-5-5s2.240-5 5-5 5 2.240 5 5-2.240 5-5 5zm0-8c-1.660 0-3 1.340-3 3s1.340 3 3 3 3-1.340 3-3-1.340-3-3-3z"/></svg>
<div class="abs" style="left:1236.400px;top:722.200px;width:43.400px;height:43.400px;border-radius:50%;background:#2250a5;box-shadow:0 2px 4px rgba(0,0,0,.35)"></div>
<svg class="abs" style="left:1236.400px;top:722.200px" width="43.400" height="43.400" viewBox="0 0 43.400 43.400"><path d="M13.700,16.200 H29.700 M13.700,21.700 H29.700 M13.700,27.200 H29.700" stroke="#fff" stroke-width="2" fill="none"/></svg>


</div>
</body>
</html>
